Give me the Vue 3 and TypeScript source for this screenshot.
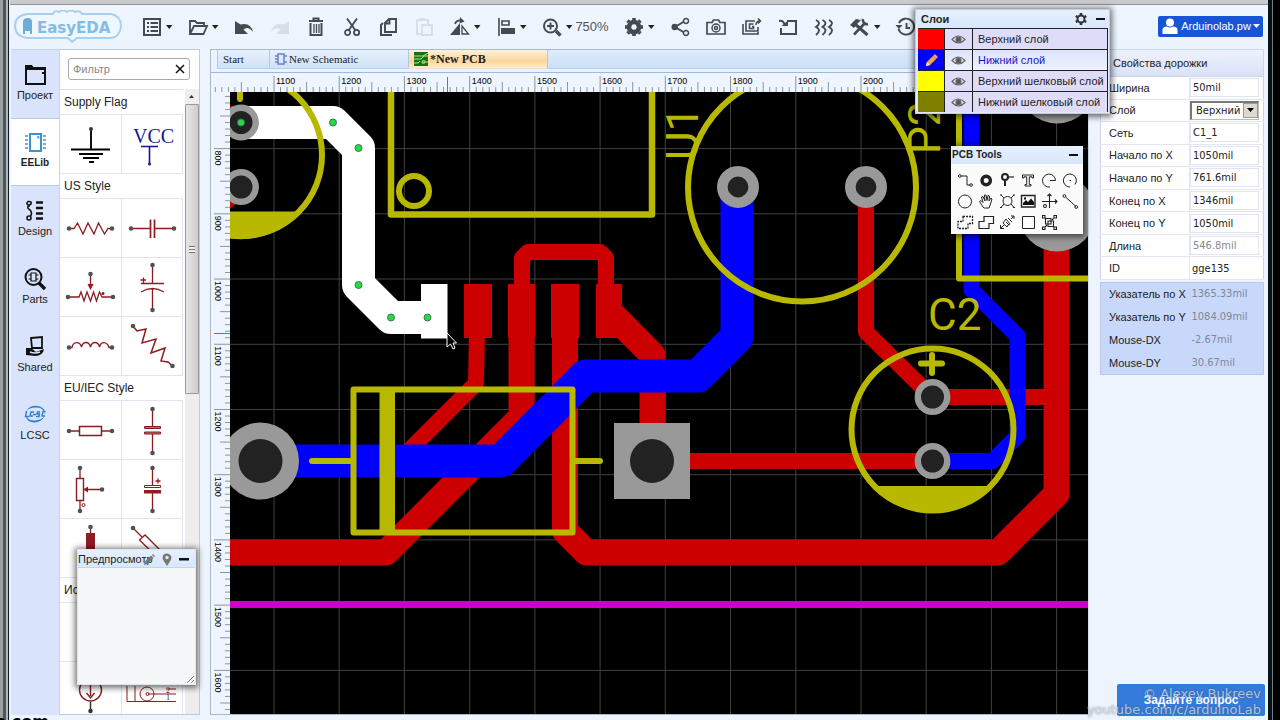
<script setup lang="ts">
import { computed, onMounted, onUnmounted, ref } from 'vue'

interface Shape { d: string; fill?: string; stroke?: string; w?: number; dash?: string }
interface Tool { name: string; caret?: boolean; faint?: boolean; label?: string; shapes: Shape[] }

const G = '#444a50'
const line = (d: string, w = 2): Shape => ({ d, stroke: G, w })
const solid = (d: string): Shape => ({ d, fill: G })

const undoPath = 'M3 6V19H16L11.5 14.5Q16 10.500 21 17Q18.500 7 8.500 9.500Z'

const tools: Tool[] = [
  { name: 'Document', caret: true, shapes: [line('M4 4H20V20H4Z'), line('M7 8H9M7 12H9M7 16H9M10.500 8H18M10.500 12H18M10.500 16H18')] },
  { name: 'Open', caret: true, shapes: [line('M4 18V6H9L11 8H18V11M4 19L8 11H21L17.500 19Z', 1.8)] },
  { name: 'Undo', shapes: [solid(undoPath)] },
  { name: 'Redo', faint: true, shapes: [solid('M21 6V19H8L12.500 14.500Q8 10.500 3 17Q5.500 7 15.500 9.500Z')] },
  { name: 'Delete', shapes: [line('M5 6H19M9.500 5V3.500H14.500V5', 2), line('M6.500 8V20H17.500V8', 2), line('M10 9V18M12.500 9V18M15 9V18', 1.3)] },
  { name: 'Cut', shapes: [line('M7 3.500L15.500 15.500M17 3.500L8.500 15.500', 1.9), line('M5 17.500A2.600 2.600 0 1 0 10.200 17.500A2.600 2.600 0 1 0 5 17.500M14 17.500A2.600 2.600 0 1 0 19.200 17.500A2.600 2.600 0 1 0 14 17.500', 1.8)] },
  { name: 'Copy', shapes: [line('M9 8L13 4H20V17H9ZM13.500 4V8.500H9', 1.9), line('M7 8L5 10V20H16', 2)] },
  { name: 'Paste', faint: true, shapes: [line('M5 5H16V9M5 5V19H9M10 10H20V20H10ZM8 4H13', 2)] },
  { name: 'Rotate and flip', caret: true, shapes: [solid('M12 8V20H2Z'), line('M14 11L20.500 19H14Z', 1.3), line('M7 9Q9 4 15 6', 1.8), solid('M12 2L16.500 6.500L11.500 8.500Z')] },
  { name: 'Align', caret: true, shapes: [line('M5 3V21', 1.6), line('M8 6H15V10H8Z', 1.6), solid('M7 13H21V19H7Z')] },
  { name: 'Zoom', caret: true, label: '750%', shapes: [line('M4 11A6.500 6.500 0 1 0 17 11A6.500 6.500 0 1 0 4 11', 2), line('M7 11H14M10.500 7.500V14.500', 1.9), line('M16 16L20.500 20.500', 3.4)] },
  { name: 'Settings', caret: true, shapes: [line('M12 7A5 5 0 1 1 11.990 7', 4.5), line('M12 3V5M12 19V21M3 12H5M19 12H21M5.600 5.600L7 7M17 17L18.400 18.400M18.400 5.600L17 7M5.600 18.400L7 17', 3.6)] },
  { name: 'Share', shapes: [line('M17 6L7 12L17 18', 1.9), solid('M3.500 12A3.200 3.200 0 1 1 9.900 12A3.200 3.200 0 1 1 3.500 12'), { d: 'M15.500 6A2.500 2.500 0 1 1 20.500 6A2.500 2.500 0 1 1 15.500 6M15.500 18A2.500 2.500 0 1 1 20.500 18A2.500 2.500 0 1 1 15.500 18', stroke: G, w: 1.6, fill: '#edf4fd' }] },
  { name: 'Snapshot', shapes: [line('M3 7.500H8L9.500 5H14.500L16 7.500H21V19H3Z', 1.7), line('M8 13A4 4 0 1 0 16 13A4 4 0 1 0 8 13M10.500 13A1.500 1.500 0 1 0 13.500 13A1.500 1.500 0 1 0 10.500 13', 1.5)] },
  { name: 'Gerber output', shapes: [line('M3 9V19H18V17M15 6H6V16H18V12', 1.6), line('M13.500 9H9.500V13.500H13.500V11.500H12', 1.6), line('M16 10Q16 6 20 6M18 3.500L20.500 6L18 8.500', 1.5)] },
  { name: 'Import', shapes: [line('M11 6H20V19H5V13', 2), line('M3 6Q8 5 9 11', 2), solid('M5.500 11H12V5.500Z')] },
  { name: 'Differential pair', shapes: [line('M4 5Q10 8 4 12Q10 15 4 20M10.500 5Q16.500 8 10.500 12Q16.500 15 10.500 20M17 5Q23 8 17 12Q23 15 17 20', 1.9)] },
  { name: 'Tools', caret: true, shapes: [line('M7 9L19.500 20', 3), line('M17.500 7.500L6 19.500', 2.6), line('M15 4A4 4 0 0 0 20 9', 2.6), solid('M2 10L8 4L13 5L10 8L6 13Z')] },
  { name: 'History', shapes: [line('M5 8A8 8 0 1 1 4.500 14M12.500 8V13H16', 1.9), solid('M1.500 10H8.500L5 14Z')] },
]

const S = '#8c1d22'
const red = (d: string, w = 1.3): Shape => ({ d, stroke: S, w })
const dots = (...p: number[][]): Shape => ({ d: p.map(([x, y]) => `M${x - 2.3} ${y}a2.300 2.300 0 1 0 4.600 0a2.300 2.300 0 1 0 -4.600 0`).join(''), fill: '#505055' })

interface Symbol { name: string; shapes: Shape[]; texts?: { t: string; x: number; y: number; s: number; c: string }[] }
const groups: { title: string; items: Symbol[] }[] = [
  { title: 'Supply Flag', items: [
    { name: 'GND', shapes: [{ d: 'M31 14V34', stroke: '#111', w: 2 }, { d: 'M11 34.500H50M19 39H43M23 43H39M29 47H34', stroke: '#000', w: 2 }, { d: 'M29 14a2 2 0 1 0 4 0a2 2 0 1 0 -4 0', fill: '#333' }] },
    { name: 'VCC', texts: [{ t: 'VCC', x: 11, y: 28, s: 20, c: '#17178c' }], shapes: [{ d: 'M19 31.500H36M27.500 32V49', stroke: '#17178c', w: 1.6 }, { d: 'M26 49a1.500 1.500 0 1 0 3 0a1.500 1.500 0 1 0 -3 0', fill: '#17178c' }] },
  ] },
  { title: 'US Style', items: [
    { name: 'Resistor', shapes: [red('M9 29.500H14L17.500 24L23 35L28 24L34 35L38.500 24L44.500 35L48 29.500H52'), dots([9, 29.5], [52, 29.5])] },
    { name: 'Capacitor', shapes: [red('M9 29.500H28.500M32.500 29.500H52', 1.4), red('M28.500 20.500V39M32.500 20.500V39', 1.7), dots([9, 29.5], [52, 29.5])] },
    { name: 'Potentiometer', shapes: [red('M8 39H19L21 34L24 43L27 34L30.500 43L33.500 34L36.500 43L39.500 34L42 39H53M30.500 16V28'), { d: 'M27.500 26H33.500L30.500 32ZM41.500 35.500a1.500 1.500 0 1 0 3 0a1.500 1.500 0 1 0 -3 0', fill: '#a01418' }, dots([8, 39], [53, 39], [30.5, 16])] },
    { name: 'Polarised capacitor', shapes: [red('M30.500 7V25.500M30.500 30V52M19 25.500H42M19 34Q30.500 27 42 34M18.500 22H24M21.500 19.500V25'), dots([30.5, 7], [30.5, 52])] },
    { name: 'Inductor', shapes: [red('M9 30.500H12C13 24 20 24 21.500 30C23 24 29 24 30.500 30C32 24 38 24 39.500 30C41 24 47 24 49 30.500H52'), dots([9, 30.5], [52, 30.5])] },
    { name: 'Angled resistor', shapes: [red('M11 9L15 14L24 12L20 26L34 22L29 36L43 31L39 44L46 45L50.500 49', 1.5), dots([11, 9], [50.5, 49])] },
  ] },
  { title: 'EU/IEC Style', items: [
    { name: 'EU resistor', shapes: [red('M9 30H19M42 30H52'), red('M19.500 25.500H41.500V34.500H19.500Z', 1.5), dots([9, 30], [52, 30])] },
    { name: 'EU capacitor', shapes: [red('M30.500 8V26M30.500 33V52'), { d: 'M22.500 25.500H38.500V27.500H22.500ZM22.500 31H38.500V33H22.500Z', stroke: S, w: 1, fill: '#b46a6d' }, dots([30.5, 8], [30.5, 52])] },
    { name: 'EU potentiometer', shapes: [red('M20 8V18M20 41V51M24 29.500H42'), red('M16.500 18.500H23.500V40.500H16.500Z', 1.4), { d: 'M23.500 29.500L28 26.500V32.500Z', fill: '#a01418' }, red('M22 45a1.500 1.500 0 1 0 3 0a1.500 1.500 0 1 0 -3 0', 1), dots([20, 8], [20, 51], [42, 29.5])] },
    { name: 'EU polarised capacitor', shapes: [red('M30.500 8V25M30.500 33V51M33.500 21H38.500M36 18.500V23.500'), red('M22.500 25.500H38.500V27.500H22.500Z', 1), { d: 'M22 30H39V33.500H22Z', fill: S }, dots([30.5, 8], [30.5, 51])] },
    { name: 'Fuse', shapes: [red('M30.500 8V51'), { d: 'M26 14H35V44H26Z', fill: S }, dots([30.5, 8], [30.5, 51])] },
    { name: 'Angled EU resistor', shapes: [red('M11 9L20 18'), red('M17.500 21L23 16L41 34L36 39Z', 1.3), dots([11, 9], [50, 49])] },
  ] },
  { title: 'Источники', items: [
    { name: 'Voltage source', shapes: [red('M30.500 8V51')] },
    { name: 'Battery', shapes: [red('M30.500 8V51')] },
    { name: 'Current source', shapes: [red('M19.500 28a11 11 0 1 0 22 0a11 11 0 1 0 -22 0M30.500 20V34M26.500 31L30.500 36L34.500 31', 1.4), { d: 'M30.500 40V49M29 49a1.500 1.500 0 1 0 3 0a1.500 1.500 0 1 0 -3 0', stroke: '#333', w: 1.5, fill: '#333' }] },
    { name: 'Power jack', texts: [{ t: '2', x: 44, y: 31, s: 8, c: S }, { t: '1', x: 44, y: 38, s: 8, c: '#333' }], shapes: [red('M5 24V39.500H54M13 24V39.500M26 32H54M54 27H44M18 32a7 7 0 1 0 14 0a7 7 0 1 0 -14 0M24 32a1.500 1.500 0 1 0 3 0a1.500 1.500 0 1 0 -3 0', 1)] },
  ] },
]

const B = '#111'
const sideTabs: { label: string; shapes: Shape[] }[] = [
  { label: 'Проект', shapes: [{ d: 'M4 6H23V22H4Z', stroke: B, w: 2 }, { d: 'M3 3H10L12 6H23V8H3Z', fill: B }, { d: 'M20 10H22V12H20Z', fill: B }] },
  { label: 'EELib', shapes: [{ d: 'M8 4H19V21H8Z', stroke: '#3b93d4', w: 2 }, { d: 'M3 6H6M3 10H6M3 14H6M3 18H6M21 6H24M21 10H24M21 14H24M21 18H24M15 7H16.500V8.500', stroke: '#3b93d4', w: 1.6 }] },
  { label: 'Design', shapes: [{ d: 'M14 4.500H21M14 10H21M14 15.500H21M14 20.500H21', stroke: B, w: 2.4 }, { d: 'M8 8Q3 6 6 3.500Q10 3 9 6Q3 9 8 12Q11 15 8 19M5 20a2 2 0 1 0 4 0a2 2 0 1 0 -4 0', stroke: B, w: 1.6 }] },
  { label: 'Parts', shapes: [{ d: 'M3.500 11a8 8 0 1 0 16 0a8 8 0 1 0 -16 0', stroke: B, w: 2 }, { d: 'M9 7H14V15H9ZM6.500 9H9M6.500 13H9M14 9H16.500M14 13H16.500', stroke: B, w: 1.2 }, { d: 'M17 17L23 23', stroke: B, w: 3.4 }] },
  { label: 'Shared', shapes: [{ d: 'M9 4L20 3V14H10Z', stroke: B, w: 1.8 }, { d: 'M4 14L9 14L14 18L22 15Q21 22 13 22L4 21Z', fill: B }, { d: 'M8 18Q13 20 18 18', stroke: '#dbe5fd', w: 1.4 }] },
  { label: 'LCSC', shapes: [{ d: 'M4 9Q9 2 18 4.500Q24 7 23 12Q22 6 15 5.500Q8 5 4 9M23 14Q18 22 9 20Q4 18 4 14Q7 19 13 18.500Q19 18 23 14', fill: '#2f7fd0' }, { d: 'M4.500 9L3.500 14.500H7M12 10H9L8 14H11M18 10H15.500L15 12H17.500L17 14.500H14M23.500 9.500H21L20 14H23M11 12.500H14', stroke: '#2f7fd0', w: 1.4 }] },
]
const activeSide = ref('EELib')
const filter = ref('')

const size = ref({ w: window.innerWidth, h: window.innerHeight })
const measure = () => { size.value = { w: window.innerWidth, h: window.innerHeight } }
onMounted(() => window.addEventListener('resize', measure))
onUnmounted(() => window.removeEventListener('resize', measure))

const PITCH = 65.22
const major = (start: number, first: number, end: number) =>
  Array.from({ length: Math.max(0, Math.floor((end - start) / PITCH) + 1) }, (_, i) => ({ v: (first + i) * 100, p: Math.round((start + i * PITCH) * 10) / 10 }))
const ticks = (start: number, end: number) =>
  Array.from({ length: Math.max(0, Math.floor((end - start) / PITCH * 10) + 10) }, (_, i) => ({ p: start + (i - 9) * PITCH / 10, k: (i - 9) % 10 === 0 ? 2 : (i - 9) % 5 === 0 ? 1 : 0 }))
const cols = computed(() => major(274, 11, size.value.w - 220))
const rows = computed(() => major(148.6, 8, size.value.h - 40))
const hTicks = computed(() => ticks(274, size.value.w - 192))
const vTicks = computed(() => ticks(148.6, size.value.h - 7))

const layers = ref([
  { name: 'Верхний слой', color: '#ff0000' },
  { name: 'Нижний слой', color: '#0000ff' },
  { name: 'Верхний шелковый слой', color: '#ffff00' },
  { name: 'Нижний шелковый слой', color: '#808000' },
])
const activeLayer = ref(1)

const pcbTools: { name: string; shapes: Shape[] }[] = [
  { name: 'Track', shapes: [{ d: 'M4 4H10V13H13M1.500 4a1.300 1.300 0 1 0 2.600 0a1.300 1.300 0 1 0 -2.600 0M12.800 13a1.300 1.300 0 1 0 2.600 0a1.300 1.300 0 1 0 -2.600 0', w: 1 }] },
  { name: 'Pad', shapes: [{ d: 'M4 8.500a4.200 4.200 0 1 0 8.400 0a4.200 4.200 0 1 0 -8.400 0', w: 3.4 }] },
  { name: 'Via', shapes: [{ d: 'M3 5a3 3 0 1 0 6 0a3 3 0 1 0 -6 0M6 8V14', w: 2 }, { d: 'M9 5H15', w: 1.2 }] },
  { name: 'Text', shapes: [{ d: 'M2.500 3H13.500V6H12V4.800H9.300V12.500H11V14H5V12.500H6.700V4.800H4V6H2.500Z', w: 1 }] },
  { name: 'Arc', shapes: [{ d: 'M9 15A6.500 6.500 0 1 1 14.500 8.500H9', w: 1 }] },
  { name: 'Center arc', shapes: [{ d: 'M8 15A6.500 6.500 0 1 1 13 12.500M7.500 8.500H9', w: 1 }] },
  { name: 'Circle', shapes: [{ d: 'M1.500 8.500a6.500 6.500 0 1 0 13 0a6.500 6.500 0 1 0 -13 0', w: 1 }] },
  { name: 'Pan', shapes: [{ d: 'M5 14L1.500 8.500L3 7.500L5 9.500L3.500 4L5 3.500L7 8L6.500 2L8 2L9 7.500L10 2.500L11.500 3L11 8L13 5L14 6L12.500 11L11 15H6Z', w: 1 }] },
  { name: 'Hole', shapes: [{ d: 'M4 8a4.500 4.500 0 1 0 9 0a4.500 4.500 0 1 0 -9 0M2 2L5 5M15 2L12 5M2 14.500L5 11M15 14.500L12 11M1 2H3M14 2H16M1 14.500H3M14 14.500H16', w: 1 }] },
  { name: 'Image', shapes: [{ d: 'M1.500 2.500H15V14H1.500Z', w: 1.4 }, { d: 'M3 12V10L6 7L8 9L11 5.500L14 9V12ZM4 4.500H6V6.500H4Z', fill: '#111', w: 0 }] },
  { name: 'Canvas origin', shapes: [{ d: 'M8.500 1V15M1 8.500H16M6.500 3L8.500 1L10.500 3M14 6.500L16 8.500L14 10.500M2.500 13a1.500 1.500 0 1 0 3 0a1.500 1.500 0 1 0 -3 0', w: 1.1 }] },
  { name: 'Connect', shapes: [{ d: 'M3.500 4L13.500 13M1 3a1.400 1.400 0 1 0 2.800 0a1.400 1.400 0 1 0 -2.800 0M12.800 14a1.400 1.400 0 1 0 2.800 0a1.400 1.400 0 1 0 -2.800 0', w: 1 }] },
  { name: 'Copper area', shapes: [{ d: 'M6 2.500H15.500V9.500H11V14.500H1V7.500H6Z', w: 1.3, dash: '2 1' }] },
  { name: 'Solid region', shapes: [{ d: 'M6 2.500H15.500V9.500H11V14.500H1V7.500H6Z', w: 1.2 }] },
  { name: 'Measure', shapes: [{ d: 'M1.500 14.500L5 11M12 5L15 2M1.500 11V14.500H5M12 2H15V5M4 9L8 13L9 11L11 10L7 5ZM7 8L10 11M9 4L13 8', w: 1 }] },
  { name: 'Rect', shapes: [{ d: 'M2.500 2.500H14.500V14.500H2.500Z', w: 1 }] },
  { name: 'Group', shapes: [{ d: 'M4.500 4.500H10V10H4.500ZM7 7H12.500V12.500H7Z', w: 1.1 }, { d: 'M1.500 1.500H4V4H1.500ZM13 1.500H15.500V4H13ZM1.500 13H4V15.500H1.500ZM13 13H15.500V15.500H13ZM4 4L5 5M12.500 4.500L11 6M4 13L6 11', w: 1.1 }] },
]

const props1 = ref([
  { id: 'width', label: 'Ширина', value: '50mil' },
  { id: 'layer', label: 'Слой', value: 'Верхний слой', kind: 'select' },
  { id: 'net', label: 'Сеть', value: 'C1_1' },
  { id: 'sx', label: 'Начало по X', value: '1050mil' },
  { id: 'sy', label: 'Начало по Y', value: '761.6mil' },
  { id: 'ex', label: 'Конец по X', value: '1346mil' },
  { id: 'ey', label: 'Конец по Y', value: '1050mil' },
  { id: 'len', label: 'Длина', value: '546.8mil', kind: 'readonly' },
  { id: 'gid', label: 'ID', value: 'gge135', kind: 'plain' },
])
const pointer = [
  ['Указатель по X', '1365.33mil'],
  ['Указатель по Y', '1084.09mil'],
  ['Mouse-DX', '-2.67mil'],
  ['Mouse-DY', '30.67mil'],
]

const smallPads = [[241, 122.5], [241, 187], [932.5, 397], [932.5, 461]]
const vias = [[738, 187], [866, 187]]
const bigPads = [[1057, 85], [1057, 213], [260.5, 461]]
const handles = [[241, 122.5], [333, 122.5], [358.5, 148], [358.5, 285], [391, 317.5], [427.5, 317.5]]
</script>

<template>
  <div class="desktop">
    <div class="edge-left"></div>
    <div class="window">
      <div class="titlebar"></div>
      <header class="toolbar">
        <a class="logo" href="#" aria-label="EasyEDA">
          <svg width="110" height="34" viewBox="0 0 110 34">
            <path d="M14 4H40Q41 0 46 2Q50 -1 54 2Q58 -1 62 2Q67 0 69 4H98Q108 6 108 16Q107 27 98 28H64L59 32L55 28H14Q2 26 2 16Q2 6 14 4Z" fill="#eef6fe" stroke="#a9d0ee" stroke-width="2" />
            <path d="M10 24V12Q10 8 15 8Q19 8 19 12V24H17V21H12V24Z" fill="#6fabd9" />
            <text x="24" y="23" font-family="DejaVu Sans, sans-serif" font-weight="bold" font-size="15" fill="#86bce4">EasyEDA</text>
          </svg>
        </a>
        <nav class="tools">
          <button v-for="t in tools" :key="t.name" class="tool" :class="{ faint: t.faint }" :aria-label="t.name">
            <svg width="24" height="24" viewBox="0 0 24 24" fill="none">
              <path v-for="(s, i) in t.shapes" :key="i" :d="s.d" :fill="s.fill || 'none'" :stroke="s.stroke || 'none'" :stroke-width="s.w" />
            </svg>
            <svg v-if="t.caret" width="10" height="10" viewBox="0 0 10 10"><path d="M2 3H8.500L5.200 7Z" fill="#222" /></svg>
            <span v-if="t.label" class="zoom-label">{{ t.label }}</span>
          </button>
        </nav>
        <button class="user">
          <svg width="18" height="18" viewBox="0 0 18 18" fill="#fff"><path d="M5 5.500a4 4 0 1 1 8 0a4 4 0 1 1 -8 0M1.500 17V13Q1.500 9.500 6 9.500Q9 11.500 12 9.500Q16.500 9.500 16.500 13V17Z" /></svg>
          <span>Arduinolab.pw</span>
          <svg width="7" height="5" viewBox="0 0 7 5" fill="#fff"><path d="M0 0H7L3.500 4Z" /></svg>
        </button>
      </header>

      <div class="body">
        <nav class="side">
          <button v-for="t in sideTabs" :key="t.label" class="side-tab" :class="{ active: activeSide === t.label }" @click="activeSide = t.label">
            <svg width="27" height="25" viewBox="0 0 27 25">
              <path v-for="(s, i) in t.shapes" :key="i" :d="s.d" :fill="s.fill || 'none'" :stroke="s.stroke || 'none'" :stroke-width="s.w" />
            </svg>
            <span>{{ t.label }}</span>
          </button>
        </nav>

        <section class="library">
          <div class="filter">
            <input v-model="filter" type="text" placeholder="Фильтр" aria-label="Фильтр" />
            <button aria-label="Очистить" @click="filter = ''">
              <svg width="10" height="10" viewBox="0 0 10 10"><path d="M1 1L9 9M9 1L1 9" stroke="#111" stroke-width="1.500" /></svg>
            </button>
          </div>
          <div class="library-scroll">
            <div class="groups">
              <template v-for="g in groups" :key="g.title">
                <h3>{{ g.title }}</h3>
                <div class="cells">
                  <button v-for="c in g.items" :key="c.name" class="cell" :aria-label="c.name">
                    <svg width="61" height="58" viewBox="0 0 61 58">
                      <path v-for="(s, i) in c.shapes" :key="i" :d="s.d" :fill="s.fill || 'none'" :stroke="s.stroke || 'none'" :stroke-width="s.w" />
                      <text v-for="x in c.texts" :key="x.t" :x="x.x" :y="x.y" :font-size="x.s" :fill="x.c" font-family="Liberation Serif, serif">{{ x.t }}</text>
                    </svg>
                  </button>
                </div>
              </template>
            </div>
            <div class="scrollbar">
              <svg width="13" height="15" viewBox="0 0 13 15"><path d="M4 9H9L6.500 6Z" fill="#333" /></svg>
              <div class="thumb"><i></i></div>
            </div>
          </div>
        </section>

        <main class="editor">
          <div class="tabs">
            <button class="tab start">Start</button>
            <button class="tab doc">
              <svg width="12" height="14" viewBox="0 0 12 14"><path d="M3 2H9V12H3ZM0 4H3M0 7H3M0 10H3M9 4H12M9 10H12" fill="none" stroke="#6b83c9" stroke-width="1.500" /></svg>
              New Schematic
            </button>
            <button class="tab doc current">
              <svg width="14" height="14" viewBox="0 0 14 14"><path d="M0 0H14V14H0Z" fill="#147314" /><path d="M0 4H9L14 1M0 7H7L10 4H14M0 11H4L6 9M8 10a1.500 1.500 0 1 0 3 0a1.500 1.500 0 1 0 -3 0H14" fill="none" stroke="#b9e08a" stroke-width="1" /></svg>
              *New PCB
            </button>
            <div class="tab-rest"></div>
          </div>
          <div class="workspace">
            <svg class="h-ruler">
              <g transform="translate(-211 -73)">
                <path v-for="(t, i) in hTicks" :key="i" :d="`M${t.p} ${t.k === 2 ? 76 : t.k === 1 ? 82 : 87}V92`" stroke="#8d949c" stroke-width="1" />
                <path d="M447.500 77V92" stroke="#3d83c9" stroke-width="1" />
                <text v-for="c in cols" :key="c.v" :x="c.p + 2" y="84" font-size="9">{{ c.v }}</text>
              </g>
            </svg>
            <svg class="v-ruler">
              <g transform="translate(-211 -92)">
                <path v-for="(t, i) in vTicks" :key="i" :d="`M${t.k === 2 ? 214 : t.k === 1 ? 220 : 225} ${t.p}H230`" stroke="#8d949c" stroke-width="1" />
                <path d="M214 333.500H230" stroke="#3d83c9" stroke-width="1" />
                <text v-for="r in rows" :key="r.v" :transform="`translate(215 ${r.p + 2}) rotate(90)`" font-size="9">{{ r.v }}</text>
              </g>
            </svg>
            <svg class="board">
              <g transform="translate(-230 -92)">
                <g stroke="#404040" stroke-width="1">
                  <path v-for="c in cols" :key="c.v" :d="`M${c.p} 92V1600`" />
                  <path v-for="r in rows" :key="r.v" :d="`M230 ${r.p}H2400`" />
                </g>
                <g fill="none" stroke="#cc0000" stroke-linejoin="round">
                  <g stroke-width="26">
                    <path d="M521.500 330V417L386 552.500H220" />
                    <path d="M565 330V531L586.500 552.500H998L1056.500 494V230" />
                    <path d="M608 310L652.500 355V430" />
                  </g>
                  <g stroke-width="16">
                    <path d="M477 330L476 383.500L400 459.500" />
                    <path d="M522 290V258L528 252H600L606 258V290" />
                    <path d="M866 187V332L932 397H1056" />
                    <path d="M652 461H932" />
                  </g>
                </g>
                <path d="M464 284H492V338H464ZM508 284H535V338H508ZM551 284H579V338H551ZM596 284H622V338H596ZM230 200L236 204L230 208ZM230 106H236L230 110Z" fill="#cc0000" />
                <g fill="none" stroke="#0000ff" stroke-linejoin="round">
                  <path d="M737 187V337L698 376H585.500L501 461H262" stroke-width="33" />
                  <path d="M971.500 80V290L1017.500 336V436L992.500 461H932" stroke-width="16" />
                </g>
                <path d="M230 604.500H2400" stroke="#cc00cc" stroke-width="7" />
                <path d="M241 122.500H333L358.500 148V285L391 317.500H427" fill="none" stroke="#fff" stroke-width="33" stroke-linejoin="round" />
                <path d="M421 284H447.500V338.500H421Z" fill="#fff" />
                <path d="M614 423H690V499H614Z" fill="#999" />
                <circle v-for="(p, i) in bigPads" :key="i" :cx="p[0]" :cy="p[1]" r="38.500" fill="#999" />
                <circle cx="260.500" cy="461" r="22" fill="#222" />
                <circle cx="652" cy="461" r="22" fill="#222" />
                <circle v-for="(p, i) in smallPads" :key="i" :cx="p[0]" :cy="p[1]" r="14.700" fill="#222" stroke="#999" stroke-width="6.400" />
                <circle v-for="(p, i) in vias" :key="i" :cx="p[0]" :cy="p[1]" r="15.700" fill="#222" stroke="#999" stroke-width="10.600" />
                <g fill="none" stroke="#b8b800" stroke-width="6" stroke-linecap="round" stroke-linejoin="round">
                  <circle cx="241" cy="155" r="81" />
                  <circle cx="932.500" cy="429.500" r="81" />
                  <circle cx="802" cy="187.500" r="114" />
                  <circle cx="414" cy="191" r="15" />
                  <path d="M391 80V214.500H652V80" stroke-width="6.500" />
                  <path d="M353.500 389.500H572.500V532.500H353.500ZM312 461H351M576 461H600" />
                  <path d="M959 80V278.500H2400" />
                  <path d="M240 80V99M228 89H252M932 355V373M921 363.500H942" />
                </g>
                <path d="M379.500 389H395V532H379.500ZM180 211.500H302A81 81 0 0 1 180 211.500ZM871 486H994A84 84 0 0 1 871 486Z" fill="#b8b800" />
                <g class="silk" fill="#b8b800" font-size="44">
                  <text transform="translate(698 160) rotate(-90)">U1</text>
                  <text transform="translate(940 154) rotate(-90)">P2</text>
                  <text x="928" y="330">C2</text>
                </g>
                <circle v-for="(p, i) in handles" :key="i" :cx="p[0]" :cy="p[1]" r="3.500" fill="#22e03a" stroke="#4a6a78" stroke-width="1" />
                <path d="M447 333V347L450.500 344L453 349L455 348L453 343H456.500Z" fill="#000" stroke="#fff" stroke-width="1" />
              </g>
            </svg>
          </div>
        </main>

        <aside class="props">
          <h2>Свойства дорожки</h2>
          <table class="editable">
            <tbody>
              <tr v-for="p in props1" :key="p.id">
                <th><label :for="p.id">{{ p.label }}</label></th>
                <td>
                  <div v-if="p.kind === 'select'" class="select">
                    <select :id="p.id" v-model="p.value">
                      <option>Верхний слой</option>
                      <option>Нижний слой</option>
                    </select>
                    <span><svg width="7" height="4" viewBox="0 0 7 4"><path d="M0 0H7L3.500 4Z" /></svg></span>
                  </div>
                  <input v-else :id="p.id" v-model="p.value" type="text" :class="p.kind" :readonly="p.kind === 'readonly'" />
                </td>
              </tr>
            </tbody>
          </table>
          <table class="pointer">
            <tbody>
              <tr v-for="p in pointer" :key="p[0]"><th>{{ p[0] }}</th><td>{{ p[1] }}</td></tr>
            </tbody>
          </table>
        </aside>
      </div>
      <div class="statusbar"></div>
    </div>
    <div class="edge-right"></div>

    <section class="panel layers">
      <header>
        <b>Слои</b>
        <button class="mini" aria-label="Настройки слоёв"><svg width="14" height="14" viewBox="0 0 14 14" fill="none" stroke="#333"><path d="M3.500 7a3.500 3.500 0 1 0 7 0a3.500 3.500 0 1 0 -7 0" stroke-width="2" /><path d="M7 1V3M7 11V13M1.800 4L3.500 5M10.500 9L12.200 10M12.200 4L10.500 5M3.500 9L1.800 10" stroke-width="2.600" /></svg></button>
        <button class="mini" aria-label="Свернуть"><svg width="9" height="3" viewBox="0 0 9 3"><path d="M0 0H9V2H0Z" fill="#111" /></svg></button>
      </header>
      <ul>
        <li v-for="(l, i) in layers" :key="l.name" :class="{ active: activeLayer === i }" @click="activeLayer = i">
          <span class="swatch" :style="{ background: l.color }">
            <svg v-if="activeLayer === i" width="15" height="15" viewBox="0 0 15 15"><path d="M2 13L3 9L9 3L12 6L6 12Z" fill="#f0a73c" stroke="#b8752a" stroke-width=".5" /><path d="M9 3L11 1L14 4L12 6Z" fill="#e79aa0" /><path d="M2 13L3 9L6 12Z" fill="#f6e3c0" /></svg>
          </span>
          <span class="eye"><svg width="15" height="11" viewBox="0 0 15 11" fill="none" stroke="#666"><path d="M1 5.500Q7.500 -1.500 14 5.500Q7.500 12.500 1 5.500Z" stroke-width="1.200" /><circle cx="7.500" cy="5.500" r="2.300" fill="#555" stroke-width="1.500" /></svg></span>
          <span class="layer-name">{{ l.name }}</span>
        </li>
      </ul>
    </section>

    <section class="panel pcb-tools">
      <header>
        <b>PCB Tools</b>
        <button class="mini" aria-label="Свернуть"><svg width="9" height="3" viewBox="0 0 9 3"><path d="M0 0H9V2H0Z" fill="#111" /></svg></button>
      </header>
      <div class="tool-grid">
        <button v-for="t in pcbTools" :key="t.name" :aria-label="t.name">
          <svg width="17" height="17" viewBox="0 0 17 17">
            <path v-for="(s, i) in t.shapes" :key="i" :d="s.d" :fill="s.fill || 'none'" stroke="#222" :stroke-width="s.w" :stroke-dasharray="s.dash" />
          </svg>
        </button>
      </div>
    </section>

    <section class="panel preview">
      <header>
        <span>Предпросмотр</span>
        <div class="preview-icons">
          <svg width="12" height="12" viewBox="0 0 12 12" fill="#777"><path d="M1 11L2 7.500L8 1.500L10.500 4L4.500 10ZM9 1L10 0L12 2L11 3Z" /></svg>
          <svg width="10" height="13" viewBox="0 0 10 13" fill="#777"><path fill-rule="evenodd" d="M5 13L1.500 7.500Q-1 3 3 .8Q7 -.500 9 3Q10 5 8.500 7.500ZM3.300 4.500a1.700 1.700 0 1 0 3.400 0a1.700 1.700 0 1 0 -3.400 0" /></svg>
          <svg width="10" height="3" viewBox="0 0 10 3"><path d="M0 0H10V2.500H0Z" fill="#111" /></svg>
        </div>
      </header>
      <svg class="grip" width="7" height="7" viewBox="0 0 7 7"><path d="M0 7L7 0M4 7L7 4" stroke="#888" /></svg>
    </section>

    <button class="ask">Задайте вопрос</button>
    <p class="credit">© Alexey Bukreev<br />youtube.com/c/arduinoLab</p>
    <p class="site">lab.com</p>
  </div>
</template>

<style>
body { margin: 0; overflow: hidden; }
</style>

<style scoped>
.desktop, .desktop * { box-sizing: border-box; }
.desktop { position: relative; display: flex; height: 100vh; overflow: hidden; font: 12px/16px "Liberation Sans", Arial, sans-serif; color: #222; background: #05090c; }
button { font: inherit; color: inherit; background: none; border: 0; padding: 0; margin: 0; }
svg { display: block; flex: none; }
h2, h3, p, ul { margin: 0; padding: 0; font-weight: normal; list-style: none; }

.edge-left { width: 10px; background: linear-gradient(90deg, #9aa09f 0 3px, #4d5557 3px 6px, #a9b8c2 6px 8px, #15191c 8px 9px, #dfeefa 9px); }
.edge-right { width: 12px; background: linear-gradient(90deg, #071016 0 4px, #737b80 4px 5px, #000 5px); }
.window { flex: 1; min-width: 0; display: flex; flex-direction: column; background: #edf4fd; }
.titlebar { height: 5px; background: #c9cacb; border-bottom: 1px solid #8e9397; }
.toolbar { height: 44px; display: flex; align-items: center; padding: 0 5px 0 3px; background: linear-gradient(#f0f6fe, #ebf3fd); }
.logo { width: 127px; }
.tools { display: flex; gap: 12px; flex: 1; min-width: 0; }
.tool { display: flex; align-items: center; height: 24px; }
.faint { opacity: .12; }
.zoom-label { width: 36px; font-size: 13px; text-align: center; color: #555; }
.user { display: flex; align-items: center; justify-content: space-between; width: 105px; height: 21px; padding: 0 3px; font-size: 11px; color: #fff; background: #1755d6; border-radius: 2px; margin-bottom: 2px; }

.body { flex: 1; min-height: 0; display: flex; }
.side { width: 49px; display: flex; flex-direction: column; margin-left: 1px; background: #d9e4fc; border-right: 1px solid #c3d3f0; border-top: 1px solid #c5d4ea; }
.side-tab { height: 68px; display: flex; flex-direction: column; align-items: center; padding-top: 12px; font-size: 11px; }
.side-tab.active { background: #fff; font-size: 10px; font-weight: bold; border-top: 1px solid #b9c8e0; border-bottom: 1px solid #b9c8e0; padding-top: 11px; }
.library { width: 140px; display: flex; flex-direction: column; background: #fff; border: 1px solid #bdcbdc; border-left: 0; }
.filter { display: flex; align-items: center; margin: 8px 9px 9px 8px; height: 22px; padding: 0 4px; border: 1px solid #aaa; border-radius: 3px; }
.filter input { flex: 1; min-width: 0; padding: 0; border: 0; outline: 0; font: inherit; font-size: 11px; }
.filter input::placeholder { color: #888; }
.library-scroll { flex: 1; min-height: 0; display: flex; gap: 2px; }
.groups { flex: 1; overflow: hidden; border-top: 1px solid #ddd; }
.groups h3 { height: 25px; padding-left: 4px; line-height: 24px; font-size: 12px; border-bottom: 1px solid #e2e4ee; }
.cells { display: grid; grid-template-columns: 1fr 1fr; }
.cell { height: 59px; overflow: hidden; border-right: 1px solid #e2e4ee; border-bottom: 1px solid #e2e4ee; }
.scrollbar { width: 14px; background: #eee; }
.thumb { height: 290px; display: flex; align-items: center; justify-content: center; border: 1px solid #999; border-radius: 1px; background: linear-gradient(90deg, #e6e6e6, #cecece); }
.thumb i { width: 6px; height: 7px; background: repeating-linear-gradient(#777 0 1px, #eee 1px 3px); }

.editor { flex: 1; min-width: 0; display: flex; flex-direction: column; margin-left: 10px; border: 1px solid #a9b9cc; border-right-color: #d5e1ef; }
.tabs { height: 23px; display: flex; padding-left: 6px; border-bottom: 1px solid #9bbbe4; background: #e9f2fd; font-family: "Liberation Serif", "Times New Roman", serif; font-size: 12px; }
.tab { height: 19px; display: flex; align-items: center; gap: 2px; padding-left: 5px; border-left: 1px solid #b3c8e3; border-bottom: 1px solid #bcd0ea; background: linear-gradient(#e8f1fc, #cfe1f8); }
.tab.start { width: 52px; }
.tab.doc { width: 139px; font-size: 11px; }
.tab.current { font-size: 12px; font-weight: bold; background: linear-gradient(#fdf1dd, #fbd69b 60%, #fdebce); border-bottom-color: #f3e0c2; }
.tab.start { font-size: 11px; }
.tab-rest { flex: 1; height: 19px; border-left: 1px solid #b3c8e3; border-bottom: 1px solid #bcd0ea; background: linear-gradient(#dfedfd, #cadff8); }
.workspace { flex: 1; min-height: 0; display: grid; grid-template: 19px 1fr / 19px 1fr; background: #eef5fe; }
.h-ruler { grid-area: 1 / 1 / 2 / 3; width: 100%; height: 19px; overflow: hidden; }
.v-ruler { grid-area: 2 / 1 / 3 / 2; width: 19px; height: 100%; overflow: hidden; }
.board { grid-area: 2 / 2 / 3 / 3; width: 100%; height: 100%; overflow: hidden; background: #000; }
.silk { font-family: Roboto, "Liberation Sans", sans-serif; }

.props { width: 164px; margin: 0 4px 0 11px; }
.props h2 { height: 27px; padding-left: 12px; font-size: 11px; line-height: 27px; border: 1px solid #cdd7ea; border-bottom: 0; background: linear-gradient(#eef2fd, #dae2f8); }
table { width: 100%; border-collapse: collapse; table-layout: fixed; }
th { width: 89px; padding: 0 0 0 8px; text-align: left; font-size: 11px; font-weight: normal; white-space: nowrap; }
td { padding: 0; font-family: "DejaVu Sans Condensed", "DejaVu Sans", sans-serif; font-size: 11px; }
.editable { height: 204px; background: #fff; border: 1px solid #c9d5ea; }
.editable tr { border-bottom: 1px solid #e3e6f2; }
.editable td { padding-right: 4px; border-left: 1px solid #e3e6f2; }
.editable input { display: block; width: 100%; height: 19px; padding: 0 2px; border: 1px solid #dfe3f3; font: inherit; color: #222; background: #fff; outline: 0; }
.editable input.readonly { color: #888; }
.editable input.plain { border-color: transparent; padding: 0 1px; }
.select { position: relative; }
.select select { display: block; appearance: none; width: 100%; height: 19px; padding: 0 14px 0 4px; border: 1px solid #bbb; border-top: 2px solid #777; border-left: 2px solid #777; border-radius: 0; font: inherit; color: #222; background: #fff; overflow: hidden; }
.select span { position: absolute; right: 1px; top: 2px; width: 15px; height: 15px; display: grid; place-items: center; background: #ddd9d0; border: 1px solid #999; pointer-events: none; }
.pointer { margin-top: 2px; background: #c8d8fb; border: 1px solid #b9c9ea; }
.pointer tr { height: 23px; }
.pointer td { color: #7f8796; padding-left: 2px; }
.statusbar { height: 5px; }

.panel { position: absolute; box-shadow: 0 1px 6px 2px rgba(0, 0, 0, .55); background: #fff; font-size: 11px; }
.panel header { display: flex; align-items: center; background: linear-gradient(#e6f0fe, #d8e7fd); }
.panel header b { flex: 1; }
.layers { top: 9px; right: 170px; width: 195px; padding: 0 1px 1px 2px; border: 1px solid #ccc; background: #dfe9fc; }
.layers header { height: 18px; padding: 0 3px; gap: 8px; }
.layers li { display: flex; height: 21px; border-top: 1px solid #222; border-right: 1px solid #222; background: #dfdcfa; }
.layers li.active { color: #1515c8; background: linear-gradient(#dce4fb, #eef1fe); }
.swatch, .eye { flex: none; width: 28px; display: grid; place-items: center; border-right: 1px solid #222; }
.swatch { width: 27px; }
.layer-name { padding-left: 5px; line-height: 20px; white-space: nowrap; }
.pcb-tools { top: 146px; right: 197px; width: 132px; height: 88px; background: #fbfbfc; }
.pcb-tools header { height: 18px; padding: 0 5px 0 1px; }
.pcb-tools header b { font-size: 10px; }
.tool-grid { display: grid; grid-template-columns: repeat(6, 21px); grid-auto-rows: 21px; padding: 6px 4px 0; }
.tool-grid button { display: grid; place-items: center; }
.preview { left: 77px; top: 549px; width: 119px; height: 136px; background: #f6f7f8; border: 1px solid #d6ecec; }
.preview header { height: 18px; border-bottom: 1px solid #b9dbe9; }
.preview-icons { position: absolute; right: 6px; top: 3px; display: flex; align-items: center; gap: 7px; }
.grip { position: absolute; right: 1px; bottom: 1px; }
.ask { position: absolute; right: 15px; bottom: 4px; width: 148px; height: 32px; border-radius: 2px; background: #347bdc; color: #fff; font-weight: bold; }
.credit { position: absolute; right: 19px; bottom: 2px; text-align: right; font: 13px/16px "DejaVu Sans", sans-serif; color: rgba(220, 226, 234, .75); text-shadow: 0 0 2px rgba(60, 70, 80, .6); pointer-events: none; }
.site { position: absolute; left: -22px; bottom: -11px; font: bold 16px/18px "DejaVu Sans", sans-serif; color: #000; pointer-events: none; }
</style>
